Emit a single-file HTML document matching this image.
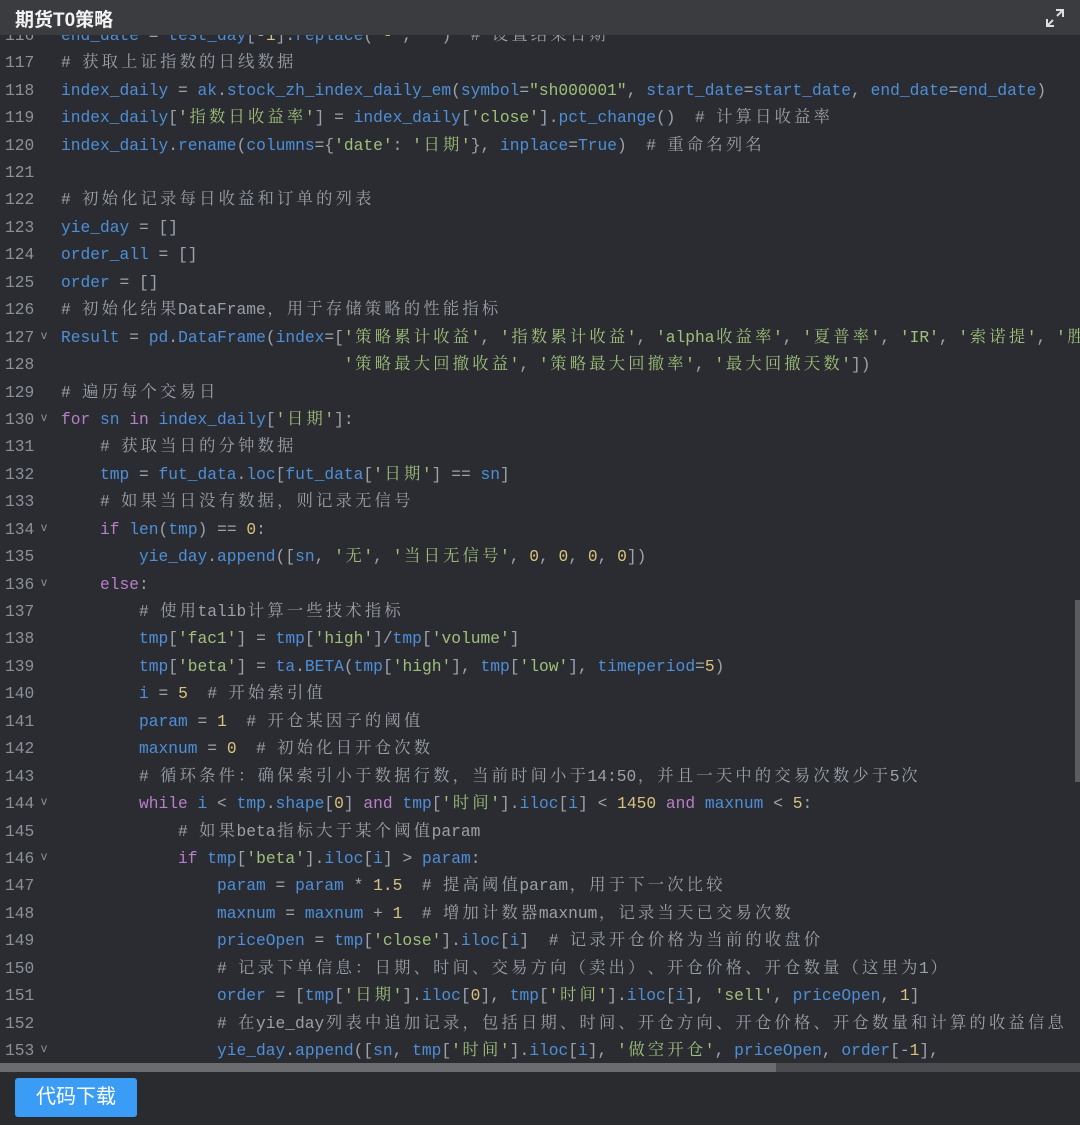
<!DOCTYPE html>
<html><head><meta charset="utf-8"><style>
html,body{margin:0;padding:0;width:1080px;height:1125px;overflow:hidden;background:#2b2c31;}
#hdr{position:absolute;left:0;top:0;width:1080px;height:35px;background:#3b3c40;z-index:3;}
#hdr .t{position:absolute;left:15px;top:5px;font:bold 19px "Liberation Sans","Noto Sans CJK SC",sans-serif;color:#f2f2f2;}
#code{position:absolute;left:0;top:35px;width:1080px;height:1028px;overflow:hidden;}
#lines{position:absolute;left:0;top:-13.2px;width:1080px;}
.l{position:relative;height:27.44px;line-height:27.44px;white-space:pre;font:16.25px "Liberation Mono","Noto Serif CJK SC",monospace;color:#4d8fd8;}
.ln{position:absolute;left:5px;top:0;color:#8c9199;line-height:27.44px;}
.fd{position:absolute;left:41px;top:4px;color:#8c9199;font:12px "Liberation Sans",sans-serif;}
.tx{position:absolute;left:61px;top:0;height:27.44px;line-height:27.44px;}
.k{color:#b77fc8}.s{color:#9fc07a}.c{color:#9aa0a8}.n{color:#d9c27d}.p{color:#9aa3ad}
.w{display:inline-block;width:19.5px;text-align:center;vertical-align:top;height:27.44px;line-height:27.44px;overflow:hidden;}
#hs{position:absolute;left:0;top:1063px;width:1080px;height:9px;background:#4a4c50;}
#hs div{position:absolute;left:0;top:0;width:776px;height:9px;background:#6a6c70;}
#vs{position:absolute;left:1075px;top:600px;width:5px;height:182px;background:#5a5c60;}
#ft{position:absolute;left:0;top:1072px;width:1080px;height:53px;background:#2a2b2f;}
#btn{position:absolute;left:15px;top:1078px;width:122px;height:39px;background:#3b9cf6;border-radius:3px;color:#fff;font:20px "Liberation Sans","Noto Sans CJK SC",sans-serif;text-align:center;line-height:39px;}
</style></head><body>
<div id="hdr"><span class="t">期货T0策略</span>
<svg style="position:absolute;left:1044px;top:7px" width="22" height="22" viewBox="0 0 22 22"><path d="M12 3h7v7M19 3l-6 6M10 19H3v-7M3 19l6-6" stroke="#ddd" stroke-width="2" fill="none"/></svg></div>
<div id="code"><div id="lines">
<div class="l"><span class="ln">116</span><span class="tx">end_date <span class="p">=</span> test_day<span class="p">[-</span><span class="n">1</span><span class="p">].</span>replace<span class="p">(</span><span class="s">'-'</span><span class="p">,</span> <span class="s">''</span><span class="p">)</span>  <span class="c"># 设置结束日期</span></span></div>
<div class="l"><span class="ln">117</span><span class="tx"><span class="c"># 获取上证指数的日线数据</span></span></div>
<div class="l"><span class="ln">118</span><span class="tx">index_daily <span class="p">=</span> ak<span class="p">.</span>stock_zh_index_daily_em<span class="p">(</span>symbol<span class="p">=</span><span class="s">"sh000001"</span><span class="p">,</span> start_date<span class="p">=</span>start_date<span class="p">,</span> end_date<span class="p">=</span>end_date<span class="p">)</span></span></div>
<div class="l"><span class="ln">119</span><span class="tx">index_daily<span class="p">[</span><span class="s">'指数日收益率'</span><span class="p">]</span> <span class="p">=</span> index_daily<span class="p">[</span><span class="s">'close'</span><span class="p">].</span>pct_change<span class="p">()</span>  <span class="c"># 计算日收益率</span></span></div>
<div class="l"><span class="ln">120</span><span class="tx">index_daily<span class="p">.</span>rename<span class="p">(</span>columns<span class="p">={</span><span class="s">'date'</span><span class="p">:</span> <span class="s">'日期'</span><span class="p">},</span> inplace<span class="p">=</span>True<span class="p">)</span>  <span class="c"># 重命名列名</span></span></div>
<div class="l"><span class="ln">121</span><span class="tx"></span></div>
<div class="l"><span class="ln">122</span><span class="tx"><span class="c"># 初始化记录每日收益和订单的列表</span></span></div>
<div class="l"><span class="ln">123</span><span class="tx">yie_day <span class="p">= []</span></span></div>
<div class="l"><span class="ln">124</span><span class="tx">order_all <span class="p">= []</span></span></div>
<div class="l"><span class="ln">125</span><span class="tx">order <span class="p">= []</span></span></div>
<div class="l"><span class="ln">126</span><span class="tx"><span class="c"># 初始化结果DataFrame，用于存储策略的性能指标</span></span></div>
<div class="l"><span class="ln">127</span><span class="fd">v</span><span class="tx">Result <span class="p">=</span> pd<span class="p">.</span>DataFrame<span class="p">(</span>index<span class="p">=[</span><span class="s">'策略累计收益'</span><span class="p">,</span> <span class="s">'指数累计收益'</span><span class="p">,</span> <span class="s">'alpha收益率'</span><span class="p">,</span> <span class="s">'夏普率'</span><span class="p">,</span> <span class="s">'IR'</span><span class="p">,</span> <span class="s">'索诺提'</span><span class="p">,</span> <span class="s">'胜率'</span></span></div>
<div class="l"><span class="ln">128</span><span class="tx">                             <span class="s">'策略最大回撤收益'</span><span class="p">,</span> <span class="s">'策略最大回撤率'</span><span class="p">,</span> <span class="s">'最大回撤天数'</span><span class="p">])</span></span></div>
<div class="l"><span class="ln">129</span><span class="tx"><span class="c"># 遍历每个交易日</span></span></div>
<div class="l"><span class="ln">130</span><span class="fd">v</span><span class="tx"><span class="k">for</span> sn <span class="k">in</span> index_daily<span class="p">[</span><span class="s">'日期'</span><span class="p">]:</span></span></div>
<div class="l"><span class="ln">131</span><span class="tx">    <span class="c"># 获取当日的分钟数据</span></span></div>
<div class="l"><span class="ln">132</span><span class="tx">    tmp <span class="p">=</span> fut_data<span class="p">.</span>loc<span class="p">[</span>fut_data<span class="p">[</span><span class="s">'日期'</span><span class="p">]</span> <span class="p">==</span> sn<span class="p">]</span></span></div>
<div class="l"><span class="ln">133</span><span class="tx">    <span class="c"># 如果当日没有数据，则记录无信号</span></span></div>
<div class="l"><span class="ln">134</span><span class="fd">v</span><span class="tx">    <span class="k">if</span> len<span class="p">(</span>tmp<span class="p">)</span> <span class="p">==</span> <span class="n">0</span><span class="p">:</span></span></div>
<div class="l"><span class="ln">135</span><span class="tx">        yie_day<span class="p">.</span>append<span class="p">([</span>sn<span class="p">,</span> <span class="s">'无'</span><span class="p">,</span> <span class="s">'当日无信号'</span><span class="p">,</span> <span class="n">0</span><span class="p">,</span> <span class="n">0</span><span class="p">,</span> <span class="n">0</span><span class="p">,</span> <span class="n">0</span><span class="p">])</span></span></div>
<div class="l"><span class="ln">136</span><span class="fd">v</span><span class="tx">    <span class="k">else</span><span class="p">:</span></span></div>
<div class="l"><span class="ln">137</span><span class="tx">        <span class="c"># 使用talib计算一些技术指标</span></span></div>
<div class="l"><span class="ln">138</span><span class="tx">        tmp<span class="p">[</span><span class="s">'fac1'</span><span class="p">]</span> <span class="p">=</span> tmp<span class="p">[</span><span class="s">'high'</span><span class="p">]/</span>tmp<span class="p">[</span><span class="s">'volume'</span><span class="p">]</span></span></div>
<div class="l"><span class="ln">139</span><span class="tx">        tmp<span class="p">[</span><span class="s">'beta'</span><span class="p">]</span> <span class="p">=</span> ta<span class="p">.</span>BETA<span class="p">(</span>tmp<span class="p">[</span><span class="s">'high'</span><span class="p">],</span> tmp<span class="p">[</span><span class="s">'low'</span><span class="p">],</span> timeperiod<span class="p">=</span><span class="n">5</span><span class="p">)</span></span></div>
<div class="l"><span class="ln">140</span><span class="tx">        i <span class="p">=</span> <span class="n">5</span>  <span class="c"># 开始索引值</span></span></div>
<div class="l"><span class="ln">141</span><span class="tx">        param <span class="p">=</span> <span class="n">1</span>  <span class="c"># 开仓某因子的阈值</span></span></div>
<div class="l"><span class="ln">142</span><span class="tx">        maxnum <span class="p">=</span> <span class="n">0</span>  <span class="c"># 初始化日开仓次数</span></span></div>
<div class="l"><span class="ln">143</span><span class="tx">        <span class="c"># 循环条件：确保索引小于数据行数，当前时间小于14:50，并且一天中的交易次数少于5次</span></span></div>
<div class="l"><span class="ln">144</span><span class="fd">v</span><span class="tx">        <span class="k">while</span> i <span class="p">&lt;</span> tmp<span class="p">.</span>shape<span class="p">[</span><span class="n">0</span><span class="p">]</span> <span class="k">and</span> tmp<span class="p">[</span><span class="s">'时间'</span><span class="p">].</span>iloc<span class="p">[</span>i<span class="p">]</span> <span class="p">&lt;</span> <span class="n">1450</span> <span class="k">and</span> maxnum <span class="p">&lt;</span> <span class="n">5</span><span class="p">:</span></span></div>
<div class="l"><span class="ln">145</span><span class="tx">            <span class="c"># 如果beta指标大于某个阈值param</span></span></div>
<div class="l"><span class="ln">146</span><span class="fd">v</span><span class="tx">            <span class="k">if</span> tmp<span class="p">[</span><span class="s">'beta'</span><span class="p">].</span>iloc<span class="p">[</span>i<span class="p">]</span> <span class="p">&gt;</span> param<span class="p">:</span></span></div>
<div class="l"><span class="ln">147</span><span class="tx">                param <span class="p">=</span> param <span class="p">*</span> <span class="n">1.5</span>  <span class="c"># 提高阈值param，用于下一次比较</span></span></div>
<div class="l"><span class="ln">148</span><span class="tx">                maxnum <span class="p">=</span> maxnum <span class="p">+</span> <span class="n">1</span>  <span class="c"># 增加计数器maxnum，记录当天已交易次数</span></span></div>
<div class="l"><span class="ln">149</span><span class="tx">                priceOpen <span class="p">=</span> tmp<span class="p">[</span><span class="s">'close'</span><span class="p">].</span>iloc<span class="p">[</span>i<span class="p">]</span>  <span class="c"># 记录开仓价格为当前的收盘价</span></span></div>
<div class="l"><span class="ln">150</span><span class="tx">                <span class="c"># 记录下单信息：日期、时间、交易方向（卖出）、开仓价格、开仓数量（这里为1）</span></span></div>
<div class="l"><span class="ln">151</span><span class="tx">                order <span class="p">= [</span>tmp<span class="p">[</span><span class="s">'日期'</span><span class="p">].</span>iloc<span class="p">[</span><span class="n">0</span><span class="p">],</span> tmp<span class="p">[</span><span class="s">'时间'</span><span class="p">].</span>iloc<span class="p">[</span>i<span class="p">],</span> <span class="s">'sell'</span><span class="p">,</span> priceOpen<span class="p">,</span> <span class="n">1</span><span class="p">]</span></span></div>
<div class="l"><span class="ln">152</span><span class="tx">                <span class="c"># 在yie_day列表中追加记录，包括日期、时间、开仓方向、开仓价格、开仓数量和计算的收益信息</span></span></div>
<div class="l"><span class="ln">153</span><span class="fd">v</span><span class="tx">                yie_day<span class="p">.</span>append<span class="p">([</span>sn<span class="p">,</span> tmp<span class="p">[</span><span class="s">'时间'</span><span class="p">].</span>iloc<span class="p">[</span>i<span class="p">],</span> <span class="s">'做空开仓'</span><span class="p">,</span> priceOpen<span class="p">,</span> order<span class="p">[-</span><span class="n">1</span><span class="p">],</span></span></div>
<div class="l"><span class="ln">154</span><span class="tx"></span></div>
</div></div>
<div id="hs"><div></div></div>
<div id="vs"></div>
<div id="ft"></div>
<div id="btn">代码下载</div>
<script>
(function(){
var re=/[\u2000-\u206f\u3000-\u9fff\uff00-\uffef]/;
function walk(n){
 if(n.nodeType===3){
  var t=n.nodeValue; if(!re.test(t))return;
  var f=document.createDocumentFragment(),buf='';
  for(var i=0;i<t.length;i++){var ch=t[i];
   if(re.test(ch)){if(buf){f.appendChild(document.createTextNode(buf));buf='';}
    var s=document.createElement('span');s.className='w';s.textContent=ch;f.appendChild(s);}
   else buf+=ch;}
  if(buf)f.appendChild(document.createTextNode(buf));
  n.parentNode.replaceChild(f,n);
 } else if(n.nodeType===1){var c=[].slice.call(n.childNodes);c.forEach(walk);}
}
document.querySelectorAll('.tx').forEach(walk);
})();
</script>
</body></html>
